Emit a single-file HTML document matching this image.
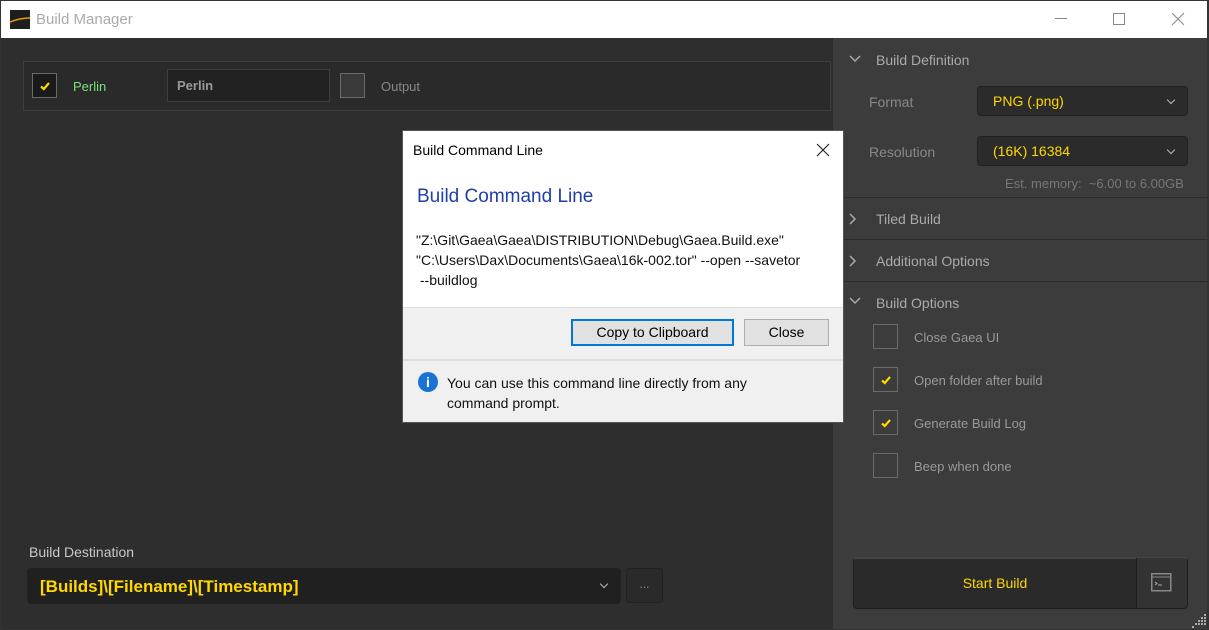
<!DOCTYPE html>
<html><head><meta charset="utf-8"><style>
*{box-sizing:border-box;margin:0;padding:0}
body{width:1209px;height:630px;overflow:hidden;background:#333;font-family:"Liberation Sans",sans-serif;position:relative}
.a{position:absolute}
.t{color:#9a9a9a;font-size:14px}
.chk{position:absolute;width:25px;height:25px;border:1px solid #6a6a6a}
.sel{position:absolute;background:#2b2b2b;border:1px solid #222;border-radius:4px;color:#ffd800;font-size:15px}
.dd{position:absolute;right:13px;top:10px;width:6px;height:6px;border-right:1.3px solid #bbb;border-bottom:1.3px solid #bbb;transform:rotate(45deg)}
.hr{position:absolute;left:835px;width:372px;height:1px;background:#2c2c2c}
</style></head><body>
<div class="a" style="left:1px;top:1px;width:1206px;height:37px;background:#fff"></div>
<div class="a" style="left:10px;top:10px;width:20px;height:19px;background:#1e1e1e"></div>
<svg class="a" style="left:10px;top:10px" width="20" height="19"><path d="M0 12 Q10 8 20 8" stroke="#e0a000" stroke-width="1.5" fill="none"/></svg>
<div class="a" style="left:36px;top:11px;font-size:15px;color:#aaa">Build Manager</div>
<div class="a" style="left:1055px;top:18px;width:12px;height:1px;background:#888"></div>
<div class="a" style="left:1113px;top:13px;width:12px;height:12px;border:1px solid #888"></div>
<svg class="a" style="left:1171px;top:12px" width="14" height="14"><path d="M1 1L13 13M13 1L1 13" stroke="#888" stroke-width="1"/></svg>
<div class="a" style="left:1px;top:38px;width:832px;height:591px;background:#2e2e2e"></div>
<div class="a" style="left:23px;top:61px;width:808px;height:50px;background:#2a2a2a;border:1px solid #3e3e3e"></div>
<div class="chk" style="left:32px;top:73px;background:#1a1a1a"></div>
<svg class="a" style="left:39px;top:80px" width="12" height="12"><path d="M2 6.5L4.8 9L10 3" stroke="#ffd800" stroke-width="2.2" fill="none"/></svg>
<div class="a" style="left:73px;top:79px;color:#7be07b;font-size:13px">Perlin</div>
<div class="a" style="left:167px;top:69px;width:163px;height:33px;background:#222;border:1px solid #3e3e3e;color:#999;font-size:13px;font-weight:bold;padding:8px 9px">Perlin</div>
<div class="chk" style="left:340px;top:73px;background:#3a3a3a"></div>
<div class="a" style="left:381px;top:79px;color:#888;font-size:13px">Output</div>
<div class="a t" style="left:29px;top:544px;color:#c8c8c8">Build Destination</div>
<div class="sel" style="left:27px;top:568px;width:594px;height:36px;background:#202020;font-weight:bold;font-size:17px;padding:8px 12px">[Builds]\[Filename]\[Timestamp]<div class="dd" style="top:12px"></div></div>
<div class="a" style="left:626px;top:568px;width:37px;height:35px;background:#2a2a2a;border:1px solid #222;border-radius:3px;color:#888;font-size:12px;text-align:center;line-height:30px">...</div>
<div class="a" style="left:833px;top:38px;width:374px;height:591px;background:#3c3c3c"></div>
<svg class="a" style="left:849px;top:55px" width="12" height="8"><path d="M1 1L6 6L11 1" stroke="#aaa" stroke-width="1.5" fill="none"/></svg>
<div class="a t" style="left:876px;top:52px;color:#aaa">Build Definition</div>
<div class="a t" style="left:869px;top:94px;color:#888">Format</div>
<div class="sel" style="left:977px;top:86px;width:211px;height:30px;padding:6px 15px;font-size:14px">PNG (.png)<div class="dd"></div></div>
<div class="a t" style="left:869px;top:144px;color:#888">Resolution</div>
<div class="sel" style="left:977px;top:136px;width:211px;height:30px;padding:6px 15px;font-size:14px">(16K) 16384<div class="dd"></div></div>
<div class="a" style="left:1005px;top:176px;font-size:13px;color:#777">Est. memory:&nbsp; ~6.00 to 6.00GB</div>
<div class="hr" style="top:197px"></div>
<svg class="a" style="left:849px;top:213px" width="8" height="12"><path d="M1 1L6 6L1 11" stroke="#aaa" stroke-width="1.5" fill="none"/></svg>
<div class="a t" style="left:876px;top:211px;color:#aaa">Tiled Build</div>
<div class="hr" style="top:239px"></div>
<svg class="a" style="left:849px;top:255px" width="8" height="12"><path d="M1 1L6 6L1 11" stroke="#aaa" stroke-width="1.5" fill="none"/></svg>
<div class="a t" style="left:876px;top:253px;color:#aaa">Additional Options</div>
<div class="hr" style="top:281px"></div>
<svg class="a" style="left:849px;top:297px" width="12" height="8"><path d="M1 1L6 6L11 1" stroke="#aaa" stroke-width="1.5" fill="none"/></svg>
<div class="a t" style="left:876px;top:295px;color:#aaa">Build Options</div>
<div class="chk" style="left:873px;top:324px"></div><div class="a" style="left:914px;top:330px;font-size:13px;color:#999">Close Gaea UI</div>
<div class="chk" style="left:873px;top:367px"></div><svg class="a" style="left:880px;top:374px" width="12" height="12"><path d="M2 6.5L4.8 9L10 3" stroke="#ffd800" stroke-width="2.2" fill="none"/></svg><div class="a" style="left:914px;top:373px;font-size:13px;color:#999">Open folder after build</div>
<div class="chk" style="left:873px;top:410px"></div><svg class="a" style="left:880px;top:417px" width="12" height="12"><path d="M2 6.5L4.8 9L10 3" stroke="#ffd800" stroke-width="2.2" fill="none"/></svg><div class="a" style="left:914px;top:416px;font-size:13px;color:#999">Generate Build Log</div>
<div class="chk" style="left:873px;top:453px"></div><div class="a" style="left:914px;top:459px;font-size:13px;color:#999">Beep when done</div>
<div class="a" style="left:853px;top:557px;width:335px;height:52px;background:#2a2a2a;border:1px solid #1e1e1e;border-top:2px solid #444;border-radius:4px"></div>
<div class="a" style="left:1136px;top:558px;width:51px;height:50px;background:#333;border-left:1px solid #1e1e1e;border-radius:0 4px 4px 0"></div>
<div class="a" style="left:853px;top:575px;width:284px;text-align:center;color:#ffd800;font-size:14px">Start Build</div>
<svg class="a" style="left:1151px;top:573px" width="21" height="19"><rect x="0.75" y="0.75" width="19" height="17" fill="none" stroke="#888" stroke-width="1.5"/><path d="M1 4H20" stroke="#888"/><path d="M4 9L6 10.5L4 12M7 12H11" stroke="#aaa" fill="none"/></svg>
<svg class="a" style="left:1192px;top:614px" width="15" height="14"><g fill="#aaa"><rect x="12" y="0" width="2" height="2"/><rect x="9" y="3" width="2" height="2"/><rect x="12" y="3" width="2" height="2"/><rect x="6" y="6" width="2" height="2"/><rect x="9" y="6" width="2" height="2"/><rect x="12" y="6" width="2" height="2"/><rect x="3" y="9" width="2" height="2"/><rect x="6" y="9" width="2" height="2"/><rect x="9" y="9" width="2" height="2"/><rect x="12" y="9" width="2" height="2"/><rect x="0" y="12" width="2" height="2"/></g></svg>
<div class="a" style="left:402px;top:130px;width:442px;height:293px;background:#fff;border:1px solid #555">
 <div class="a" style="left:10px;top:11px;font-size:14px;color:#000">Build Command Line</div>
 <svg class="a" style="left:413px;top:12px" width="14" height="14"><path d="M1 1L13 13M13 1L1 13" stroke="#222" stroke-width="1.2"/></svg>
 <div class="a" style="left:14px;top:55px;font-size:19px;color:#1f3fa8">Build Command Line</div>
 <div class="a" style="left:13px;top:99px;font-size:14px;color:#111;line-height:20px;white-space:pre">"Z:\Git\Gaea\Gaea\DISTRIBUTION\Debug\Gaea.Build.exe"
"C:\Users\Dax\Documents\Gaea\16k-002.tor" --open --savetor
 --buildlog</div>
 <div class="a" style="left:0;top:176px;width:440px;height:52px;background:#f0f0f0;border-top:1px solid #dfdfdf"></div>
 <div class="a" style="left:168px;top:188px;width:163px;height:27px;background:#e1e1e1;border:2px solid #0078d7;font-size:14px;text-align:center;line-height:23px;color:#000">Copy to Clipboard</div>
 <div class="a" style="left:341px;top:188px;width:85px;height:27px;background:#e1e1e1;border:1px solid #adadad;font-size:14px;text-align:center;line-height:25px;color:#000">Close</div>
 <div class="a" style="left:0;top:228px;width:440px;height:63px;background:#f0f0f0;border-top:2px solid #dfdfdf"></div>
 <div class="a" style="left:15px;top:241px;width:20px;height:20px;border-radius:50%;background:#1a73d2;color:#fff;font-weight:bold;font-size:14px;text-align:center;line-height:20px">i</div>
 <div class="a" style="left:44px;top:242px;font-size:14px;color:#111;line-height:20px">You can use this command line directly from any<br>command prompt.</div>
</div>
</body></html>
